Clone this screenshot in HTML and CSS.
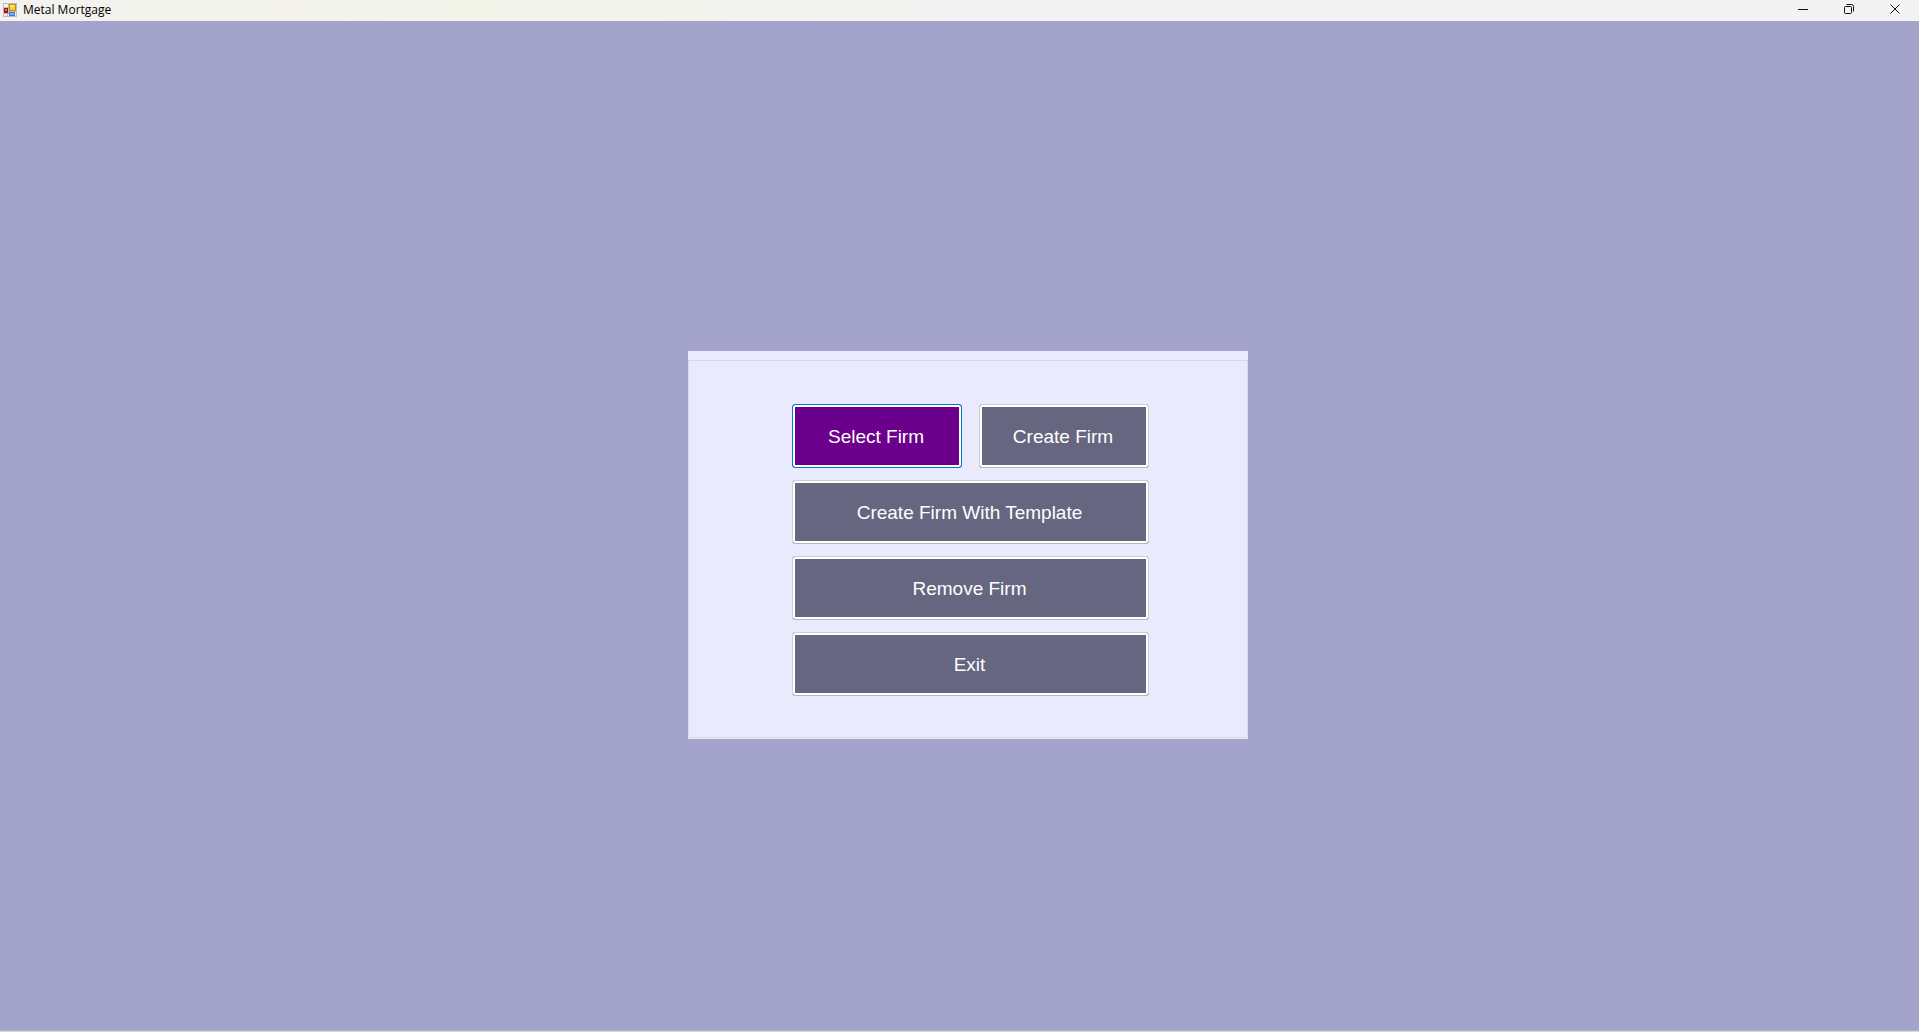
FILE: index.html
```html
<!DOCTYPE html>
<html lang="en">
<head>
<meta charset="utf-8">
<title>Metal Mortgage</title>
<link rel="stylesheet" href="styles.css">
</head>
<body>
<header class="titlebar">
  <svg class="app-icon" width="14" height="14" viewBox="0 0 14 14" shape-rendering="crispEdges" aria-hidden="true">
    <rect width="14" height="14" fill="#bdbdbd"/>
    <rect x="1" y="1" width="4" height="3" fill="#f4f4f4"/>
    <rect x="1" y="11" width="3" height="2" fill="#f4f4f4"/>
    <rect x="5" y="11" width="1" height="2" fill="#f4f4f4"/>
    <rect x="1" y="5" width="4" height="5" fill="#a80f0f"/>
    <rect x="2" y="6" width="2" height="2" fill="#e8605a"/>
    <rect x="6" y="1" width="7" height="7" fill="#c48a0c"/>
    <rect x="7" y="2" width="5" height="5" fill="#fbd03f"/>
    <rect x="7" y="2" width="4" height="2" fill="#fde489"/>
    <rect x="6" y="9" width="6" height="4" fill="#3f75d8"/>
    <rect x="7" y="10" width="4" height="2" fill="#7eaaf5"/>
    <rect x="12" y="9" width="1" height="4" fill="#f4f4f4"/>
  </svg>
  <h1 class="title">Metal Mortgage</h1>
  <div class="window-controls">
    <button class="window-button" type="button" aria-label="Minimize">
      <svg width="12" height="12" viewBox="0 0 12 12"><path d="M1 6.5H11" /></svg>
    </button>
    <button class="window-button" type="button" aria-label="Restore">
      <svg width="12" height="12" viewBox="0 0 12 12"><rect x="1.5" y="3.5" width="7" height="7" rx="1"/><path d="M3.5 1.5H8.5Q10.5 1.5 10.5 3.5V8.5"/></svg>
    </button>
    <button class="window-button" type="button" aria-label="Close">
      <svg width="12" height="12" viewBox="0 0 12 12"><path d="M1.5 1.5L10.5 10.5M10.5 1.5L1.5 10.5"/></svg>
    </button>
  </div>
</header>
<main class="workspace">
  <section class="panel">
    <div class="menu">
      <div class="menu-row">
        <button class="menu-button selected" type="button">Select Firm</button>
        <button class="menu-button" type="button">Create Firm</button>
      </div>
      <button class="menu-button" type="button">Create Firm With Template</button>
      <button class="menu-button" type="button">Remove Firm</button>
      <button class="menu-button" type="button">Exit</button>
    </div>
  </section>
</main>
</body>
</html>
```
FILE: styles.css
```css
* {
  box-sizing: border-box;
}

body {
  margin: 0;
  min-height: 100vh;
  display: flex;
  flex-direction: column;
  background: #a4a3cb;
  border-bottom: 1px solid #dadada;
}

.titlebar {
  display: flex;
  align-items: center;
  height: 21px;
  padding: 0 1px 2px 3px;
  background: linear-gradient(90deg, #f3f2ef, #f3f4ea 25%, #f3f3f3 50%);
}

.title {
  flex: 1;
  margin: 0 0 0 6px;
  font: 12px/18px "Open Sans", "Noto Sans", sans-serif;
  color: #000;
}

.window-controls {
  display: flex;
}

.window-button {
  display: flex;
  justify-content: center;
  align-items: center;
  width: 46px;
  height: 18px;
  padding: 0 0 2px;
  border: 0;
  background: none;
}

.window-button svg {
  fill: none;
  stroke: #111;
  stroke-width: 1;
}

.workspace {
  flex: 1;
  display: flex;
  justify-content: center;
  align-items: center;
  padding: 39px 0 0 17px;
  border-bottom: 1px solid #b0b0b0;
}

.panel {
  width: 560px;
  padding: 9px 0 1px;
  background: #eaeaff;
}

.menu {
  display: flex;
  flex-direction: column;
  gap: 12px;
  padding: 43px 98px 41px 103px;
  border: 1px solid #dadada;
}

.menu-row {
  display: grid;
  grid-template-columns: 1fr 1fr;
  gap: 17px;
}

.menu-button {
  height: 64px;
  padding: 2px 2px 0 0;
  border: 1px solid #d0d0d0;
  border-bottom-color: #b9b9b9;
  border-radius: 3px;
  background: #666680;
  box-shadow: inset 0 0 0 2px #fff;
  font: 19px/24px "Liberation Sans", Arial, sans-serif;
  color: #fff;
}

.menu-button.selected {
  border-color: #0078d4;
  background: #6a008c;
}
```
